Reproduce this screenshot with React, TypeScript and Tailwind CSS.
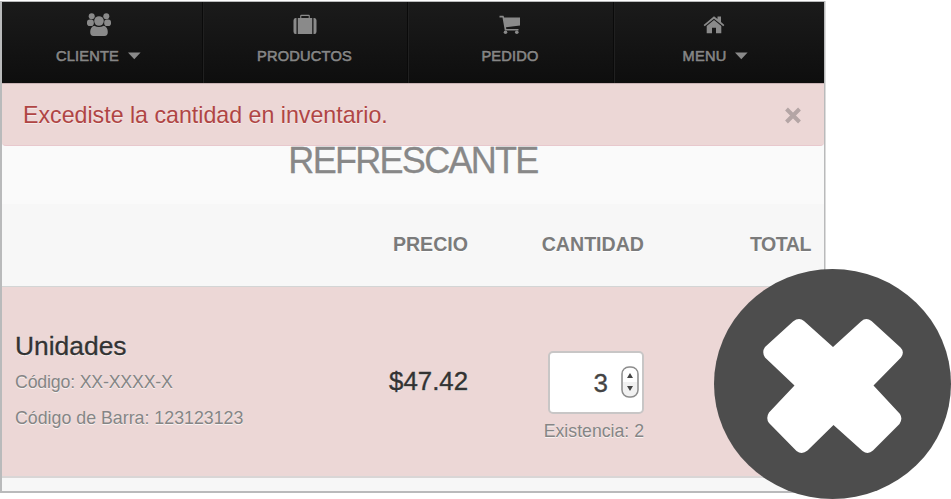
import React from 'react';

const label = 'text-[14.6px] leading-[18px] tracking-[0.2px] text-[#888] [-webkit-text-stroke:0.6px_#858585] [text-shadow:0_-1px_0_#000]';

function Caret() {
  return (
    <svg className="ml-[9px] shrink-0" width="13" height="8" viewBox="0 0 13 8">
      <path d="M0 .5H12.6L6.3 7.2Z" fill="#8a8a8a" />
    </svg>
  );
}

function GroupIcon() {
  return (
    <svg width="26" height="25" viewBox="0 0 26 25" fill="#8a8a8a">
      <circle cx="5.700" cy="4.200" r="3" />
      <circle cx="20.300" cy="4.200" r="3" />
      <rect x="1" y="7.600" width="6.800" height="6.400" rx="2.800" />
      <rect x="18.200" y="7.600" width="6.800" height="6.400" rx="2.800" />
      <circle cx="13" cy="9" r="4.800" />
      <path d="M8.300 13.800Q13 16.200 17.700 13.800Q21.800 15 21.800 20Q21.800 24 18.500 24H7.500Q4.200 24 4.200 20Q4.200 15 8.300 13.800Z" />
    </svg>
  );
}

function SuitcaseIcon() {
  return (
    <svg width="24" height="21" viewBox="0 0 24 21" fill="#8a8a8a">
      <path d="M3.500 4V20H2.500Q.5 20 .5 17.500V6.500Q.5 4 2.500 4ZM20.500 4V20H21.500Q23.500 20 23.500 17.500V6.500Q23.500 4 21.500 4Z" />
      <path fillRule="evenodd" d="M4.800 4H7.200V1.800Q7.200 .8 8.300 .8H15.700Q16.800 .8 16.800 1.800V4H19.200V20H4.800ZM8.300 2V4H15.700V2Z" />
    </svg>
  );
}

function CartIcon() {
  return (
    <svg width="22" height="20" viewBox="0 0 22 20" fill="#8a8a8a">
      <path d="M.5 .8H4.500L5.200 2.500H21V10.500L7 12.300L7.300 14H19.500V15.500H5.800L3.500 2.500H.5Z" />
      <circle cx="6.500" cy="17.200" r="1.800" />
      <circle cx="17.800" cy="17.200" r="1.800" />
    </svg>
  );
}

function HomeIcon() {
  return (
    <svg className="mr-[3px]" width="22" height="18" viewBox="0 0 22 18" fill="#8a8a8a">
      <path d="M.6 9L11 .2L14.500 3.100V.5H18V6L21.400 9L20.300 10.300L11 2.700L1.700 10.300Z" />
      <path d="M3.700 10L11 4L18.300 10V17.300H13V11.800H9V17.300H3.700Z" />
    </svg>
  );
}

function NavItem({ icon, text, caret }: { icon: React.ReactNode; text: string; caret?: boolean }) {
  return (
    <div
      className={`flex flex-col items-center border-l border-[#202020] first:border-l-0 shadow-[-1px_0_0_#0a0a0a] first:shadow-none ${caret ? 'pr-[8px]' : 'pr-[3px]'}`}
    >
      <div className="flex h-[45px] items-center justify-center">{icon}</div>
      <div className={`${label} flex items-center`}>
        <span>{text}</span>
        {caret && <Caret />}
      </div>
    </div>
  );
}

export default function App() {
  return (
    <div className="relative h-[499px] w-[951px] overflow-hidden bg-white pt-px font-['Liberation_Sans',Arial,sans-serif]">
      <main className="flex h-[492px] w-[825px] flex-col border border-l-2 border-b-2 border-[#b9babb] bg-[#f7f7f7] shadow-[1px_0_0_#dcdcdc]">
        <nav className="grid h-[81px] shrink-0 grid-cols-[201px_205px_206px_210px] bg-linear-to-b from-[#1b1b1b] to-[#0e0e0e]">
          <NavItem icon={<GroupIcon />} text="CLIENTE" caret />
          <NavItem icon={<SuitcaseIcon />} text="PRODUCTOS" />
          <NavItem icon={<CartIcon />} text="PEDIDO" />
          <NavItem icon={<HomeIcon />} text="MENU" caret />
        </nav>
        <div className="flex h-[63px] shrink-0 items-center justify-between rounded-b-sm border-t border-b border-t-[#c9b3b4] border-b-[#e8c8cd] bg-[#ecd7d6] pr-[22px] pl-[21px]">
          <p className="pt-px text-[23.2px] leading-[28px] text-[#b04544] [text-shadow:0_1px_0_rgba(255,255,255,.5)]">Excediste la cantidad en inventario.</p>
          <svg width="18" height="18" viewBox="0 0 18 18">
            <path d="M2.500 3L15.500 16M15.500 3L2.500 16" stroke="#b4a5a5" strokeWidth="4" />
          </svg>
        </div>
        <h1 className="h-[58px] shrink-0 bg-[#fafafa] text-center text-[36px] leading-[29px] tracking-[-1.7px] text-[#888] [-webkit-text-stroke:0.3px_#888]">REFRESCANTE</h1>
        <div className="grid h-[83px] shrink-0 grid-cols-[466px_176px_167px] items-center border-b border-[#d3d5d5] text-right text-[19.6px] font-bold text-[#7b7b7b] [text-shadow:0_1px_0_#fff]">
          <span>PRECIO</span>
          <span>CANTIDAD</span>
          <span className="tracking-[-0.5px]">TOTAL</span>
        </div>
        <section className="grid h-[191px] shrink-0 grid-cols-[300px_166px_176px] items-center border-b-2 border-[#d9d6d6] bg-[#ecd7d6] [text-shadow:0_1px_0_rgba(255,255,255,.7)]">
          <div className="pt-[1px] pl-[13px] text-[17.8px] leading-[36px] text-[#858585]">
            <h2 className="text-[26.400px] text-[#333] [-webkit-text-stroke:0.3px_#333]">Unidades</h2>
            <p className="tracking-[-0.2px]">Código: XX-XXXX-X</p>
            <p>Código de Barra: 123123123</p>
          </div>
          <span className="text-right text-[25.800px] text-[#333] [-webkit-text-stroke:0.4px_#333]">$47.42</span>
          <div className="flex flex-col items-end pt-[32px]">
            <div className="flex h-[63px] w-[96px] items-center justify-end gap-[13px] rounded-[5px] border-2 border-[#c8c6c6] bg-white pr-[3px] text-[26px] text-[#444] [-webkit-text-stroke:0.3px_#444]">
              <span className="pt-[2px]">3</span>
              <svg width="18" height="32" viewBox="0 0 18 32">
                <rect x="1" y="1" width="16" height="30" rx="7" fill="#f1f1f1" stroke="#8c8c8c" strokeWidth="1.500" />
                <path d="M2 16V8Q2 2 9 2Q16 2 16 8V16Z" fill="#fff" />
                <path d="M6 12L9 7L12 12ZM6 20L9 25L12 20Z" fill="#444" />
              </svg>
            </div>
            <span className="mt-[3px] text-[17.700px] leading-[28px] text-[#858585]">Existencia: 2</span>
          </div>
        </section>
      </main>
      <svg className="absolute top-[269px] left-[714px]" width="237" height="230" viewBox="714 269 237 230">
        <ellipse cx="832.500" cy="384" rx="118.500" ry="115" fill="#4d4d4d" />
        <path d="M833 347L861 321.500Q866 317 871.500 321L900.500 347.500Q905 352 901 357.500L873.500 385.500L900 414Q903 419 899.500 424L873 450.500Q868 455 862.500 451L833.500 425L807.500 450.500Q802 455 796.500 451L769 423Q765.500 418 769 412.500L794.500 385.500L765 357.500Q761.500 352 765 347L793 321.500Q799 317 804 321Z" fill="#fff" />
      </svg>
    </div>
  );
}
